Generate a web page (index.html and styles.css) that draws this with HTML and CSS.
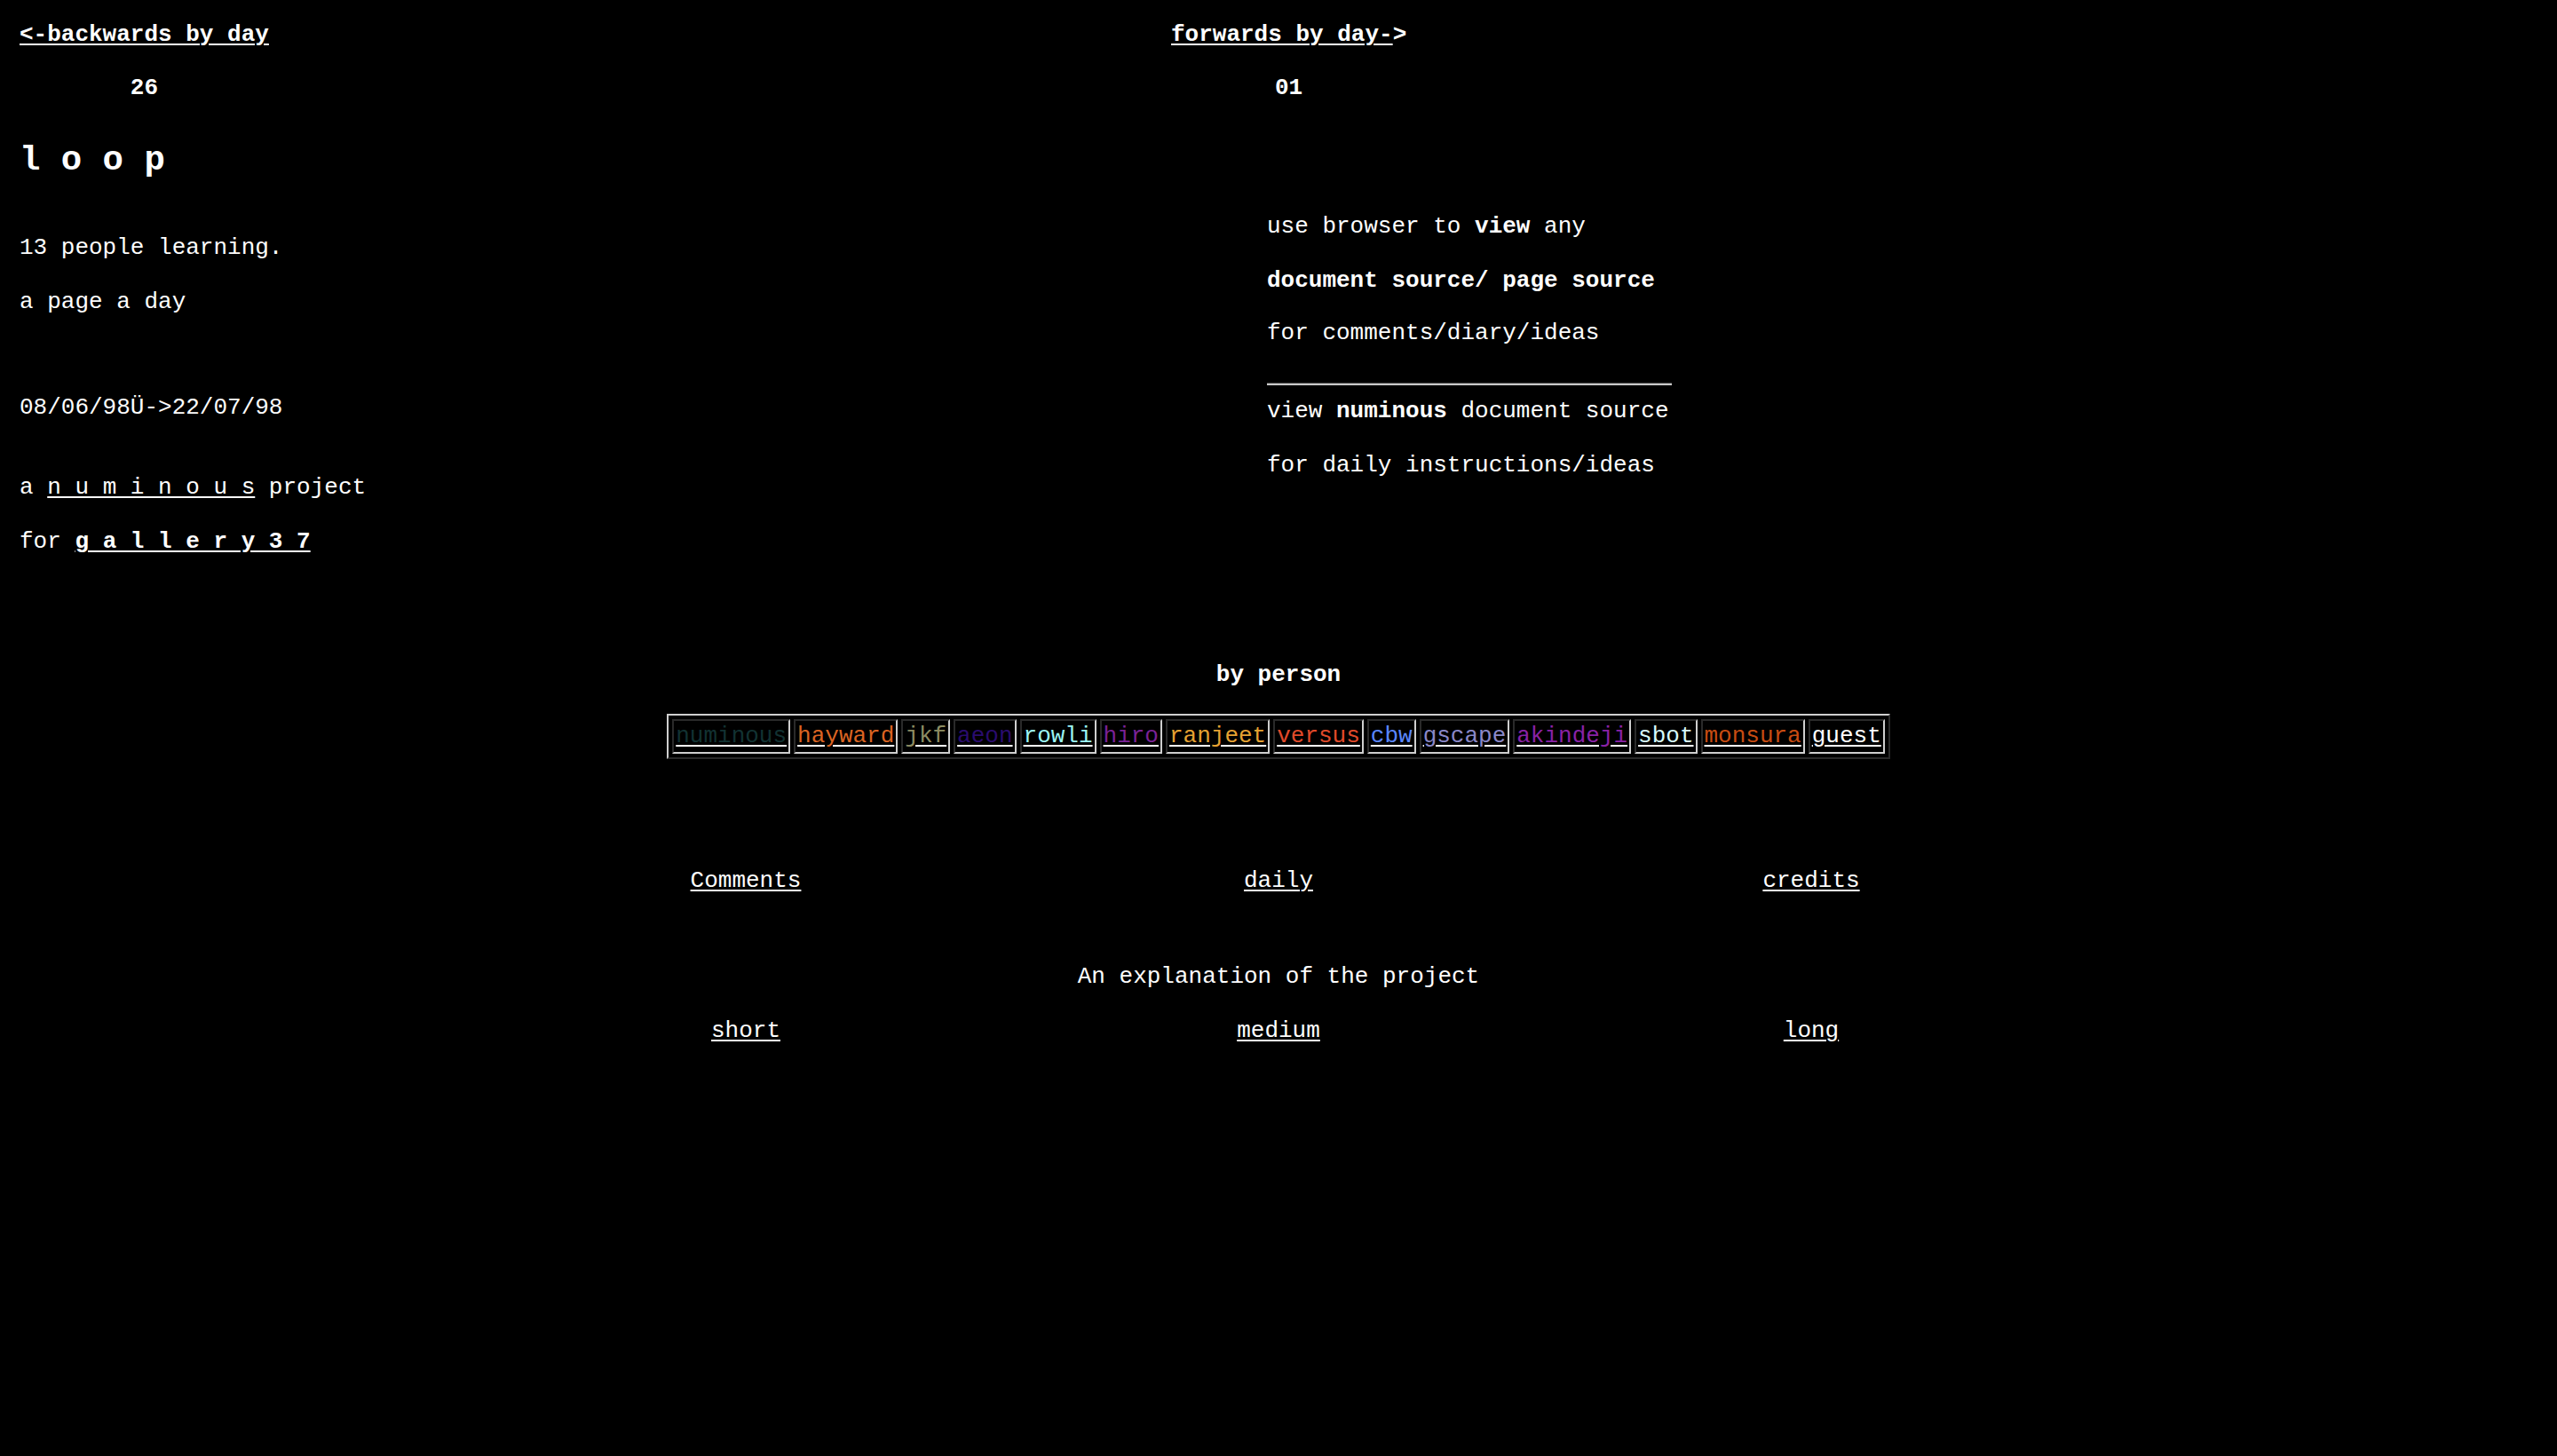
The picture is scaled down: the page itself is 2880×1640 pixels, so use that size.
FILE: index.html
```html
<!DOCTYPE html>
<html>
<head>
<meta charset="utf-8">
<title>loop</title>
<link rel="stylesheet" href="styles.css">
</head>
<body>
<div class="page">
  <div class="top">
    <div class="col-left">
      <div class="nav">
        <a href="#">&lt;-backwards by day</a>
        <b class="num">26</b>
      </div>
      <h1 class="title">l o o p</h1>
      <p class="line gap-title">13 people learning.</p>
      <p class="line gap-1">a page a day</p>
      <p class="line gap-date">08/06/98Ü-&gt;22/07/98</p>
      <p class="line gap-2">a <a href="#">n u m i n o u s</a> project</p>
      <p class="line gap-1">for <a href="#"><b>g a l l e r y 3 7</b></a></p>
    </div>
    <div class="col-right">
      <div class="nav">
        <span><a href="#">forwards by day-</a>&gt;</span>
        <b class="num">01</b>
      </div>
      <div class="source">
        <p class="line">use browser to <b>view</b> any</p>
        <p class="line gap-1"><b>document source/ page source</b></p>
        <p class="line gap-s">for comments/diary/ideas</p>
        <hr class="rule">
        <p class="line">view <b>numinous</b> document source</p>
        <p class="line gap-1">for daily instructions/ideas</p>
      </div>
    </div>
  </div>

  <div class="center">
    <p class="line"><b>by person</b></p>
    <div class="people">
      <a href="#" class="cell"><span class="c-numinous">numinous</span></a>
      <a href="#" class="cell"><span class="c-hayward">hayward</span></a>
      <a href="#" class="cell"><span class="c-jkf">jkf</span></a>
      <a href="#" class="cell"><span class="c-aeon">aeon</span></a>
      <a href="#" class="cell"><span class="c-rowli">rowli</span></a>
      <a href="#" class="cell"><span class="c-hiro">hiro</span></a>
      <a href="#" class="cell"><span class="c-ranjeet">ranjeet</span></a>
      <a href="#" class="cell"><span class="c-versus">versus</span></a>
      <a href="#" class="cell"><span class="c-cbw">cbw</span></a>
      <a href="#" class="cell"><span class="c-gscape">gscape</span></a>
      <a href="#" class="cell"><span class="c-akindeji">akindeji</span></a>
      <a href="#" class="cell"><span class="c-sbot">sbot</span></a>
      <a href="#" class="cell"><span class="c-monsura">monsura</span></a>
      <a href="#" class="cell"><span class="c-guest">guest</span></a>
    </div>

    <div class="links links-main">
      <a href="#">Comments</a>
      <a href="#">daily</a>
      <a href="#">credits</a>
    </div>

    <p class="line explain">An explanation of the project</p>

    <div class="links links-explain">
      <a href="#">short</a>
      <a href="#">medium</a>
      <a href="#">long</a>
    </div>
  </div>
</div>
</body>
</html>
```
FILE: styles.css
```css
html, body {
  margin: 0;
  padding: 0;
  background: #000;
}

body {
  color: #fff;
  font-family: "Liberation Mono", "Courier New", monospace;
  font-size: 26px;
  line-height: 30px;
  min-height: 1640px;
}

a {
  color: #fff;
  text-decoration: underline;
  text-decoration-thickness: 2px;
  text-underline-offset: 3px;
}

p {
  margin: 0;
}

b {
  font-weight: bold;
}

.page {
  padding: 24px 0 0 22px;
}

.top {
  display: flex;
}

.col-left {
  width: 1297px;
  flex: none;
}

.col-right {
  flex: 1;
}

.nav {
  display: inline-flex;
  flex-direction: column;
  align-items: center;
  font-weight: bold;
}

.nav .num {
  margin-top: 30px;
}

.title {
  margin: 45px 0 0 0;
  font-size: 39px;
  line-height: 44px;
  font-weight: bold;
}

.line {
  height: 30px;
  white-space: pre;
}

.gap-title { margin-top: 61px; }
.gap-1 { margin-top: 31px; }
.gap-s { margin-top: 29px; }
.gap-2 { margin-top: 60px; }
.gap-date { margin-top: 89px; }

.source {
  margin: 126px 0 0 108px;
  width: 456px;
}

.rule {
  margin: 41px 0 14px 0;
  height: 0;
  border: none;
  border-top: 1px solid #4a4a4a;
  border-bottom: 2px solid #c8c8c8;
}

.center {
  display: flex;
  flex-direction: column;
  align-items: center;
  margin-top: 120px;
  margin-left: -22px;
}

.people {
  margin-top: 29px;
  display: flex;
  gap: 4px;
  padding: 4px;
  border: 2px solid;
  border-color: #cfcfcf #2a2a2a #2a2a2a #cfcfcf;
}

.cell {
  display: block;
  padding: 2px;
  line-height: 31px;
  border: 2px solid;
  border-color: #2a2a2a #cfcfcf #cfcfcf #2a2a2a;
  text-underline-offset: 3px;
}

.c-numinous { color: #123232; }
.c-hayward { color: #db6422; }
.c-jkf { color: #8c8c62; }
.c-aeon { color: #2a0c6e; }
.c-rowli { color: #9cf4f4; }
.c-hiro { color: #7a2296; }
.c-ranjeet { color: #e6a232; }
.c-versus { color: #e04a2a; }
.c-cbw { color: #5a86ff; }
.c-gscape { color: #8a88c8; }
.c-akindeji { color: #8a22a6; }
.c-sbot { color: #d8fafa; }
.c-monsura { color: #c84c12; }
.c-guest { color: #ffffff; }

.links {
  display: grid;
  grid-template-columns: 600px 600px 600px;
  justify-items: center;
}

.links-main {
  margin-top: 122px;
}

.explain {
  margin-top: 78px;
}

.links-explain {
  margin-top: 31px;
}
```
